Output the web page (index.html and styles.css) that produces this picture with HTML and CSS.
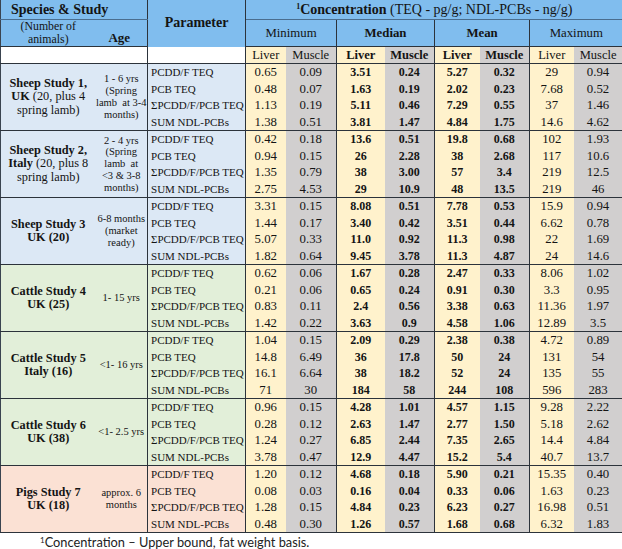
FILE: index.html
```html
<!DOCTYPE html>
<html lang="en">
<head>
<meta charset="utf-8">
<title>Concentration table</title>
<link rel="stylesheet" href="styles.css">
</head>
<body>
<table class="conc">
  <colgroup>
    <col class="w-sp"><col class="w-age"><col class="w-par">
    <col class="w-minl"><col class="w-minm">
    <col class="w-medl"><col class="w-medm">
    <col class="w-meal"><col class="w-meam">
    <col class="w-maxl"><col class="w-maxm">
  </colgroup>
  <thead>
    <tr class="hr1">
      <th colspan="2" class="hd hd-title hd-species bb-soft vr">Species &amp; Study</th>
      <th rowspan="2" class="hd hd-title vr">Parameter</th>
      <th colspan="8" class="hd hd-title bb-soft"><sup>1</sup>Concentration <span class="nb">(TEQ - pg/g; NDL-PCBs - ng/g)</span></th>
    </tr>
    <tr class="hr2">
      <th class="hd hd-num">(Number of<br>animals)</th>
      <th class="hd hd-age vr">Age</th>
      <th colspan="2" class="hd hd-stat vr">Minimum</th>
      <th colspan="2" class="hd hd-stat b vr">Median</th>
      <th colspan="2" class="hd hd-stat b vr">Mean</th>
      <th colspan="2" class="hd hd-stat">Maximum</th>
    </tr>
    <tr class="hr3">
      <td colspan="2" class="blank vr"></td>
      <td class="blank vr"></td>
      <th class="lv sub">Liver</th><th class="mu sub vr">Muscle</th>
      <th class="lv sub b">Liver</th><th class="mu sub b vr">Muscle</th>
      <th class="lv sub b">Liver</th><th class="mu sub b vr">Muscle</th>
      <th class="lv sub">Liver</th><th class="mu sub">Muscle</th>
    </tr>
  </thead>
  <tbody class="sheep">
    <tr class="first">
      <td rowspan="4" class="sp"><b>Sheep Study 1,</b><br><b>UK</b> (20, plus 4<br>spring lamb)</td>
      <td rowspan="4" class="age vr">1 - 6 yrs<br>(Spring<br>lamb&nbsp; at 3-4<br>months)</td>
      <td class="par vr">PCDD/F TEQ</td>
      <td class="lv">0.65</td><td class="mu vr">0.09</td><td class="lv b">3.51</td><td class="mu b vr">0.24</td><td class="lv b">5.27</td><td class="mu b vr">0.32</td><td class="lv">29</td><td class="mu">0.94</td>
    </tr>
    <tr><td class="par vr">PCB TEQ</td>
      <td class="lv">0.48</td><td class="mu vr">0.07</td><td class="lv b">1.63</td><td class="mu b vr">0.19</td><td class="lv b">2.02</td><td class="mu b vr">0.23</td><td class="lv">7.68</td><td class="mu">0.52</td></tr>
    <tr><td class="par vr">ΣPCDD/F/PCB TEQ</td>
      <td class="lv">1.13</td><td class="mu vr">0.19</td><td class="lv b">5.11</td><td class="mu b vr">0.46</td><td class="lv b">7.29</td><td class="mu b vr">0.55</td><td class="lv">37</td><td class="mu">1.46</td></tr>
    <tr><td class="par vr">SUM NDL-PCBs</td>
      <td class="lv">1.38</td><td class="mu vr">0.51</td><td class="lv b">3.81</td><td class="mu b vr">1.47</td><td class="lv b">4.84</td><td class="mu b vr">1.75</td><td class="lv">14.6</td><td class="mu">4.62</td></tr>
  </tbody>
  <tbody class="sheep">
    <tr class="first">
      <td rowspan="4" class="sp"><b>Sheep Study 2,</b><br><b>Italy</b> (20, plus 8<br>spring lamb)</td>
      <td rowspan="4" class="age vr">2 - 4 yrs<br>(Spring<br>lamb&nbsp; at<br>&lt;3 &amp; 3-8<br>months)</td>
      <td class="par vr">PCDD/F TEQ</td>
      <td class="lv">0.42</td><td class="mu vr">0.18</td><td class="lv b">13.6</td><td class="mu b vr">0.51</td><td class="lv b">19.8</td><td class="mu b vr">0.68</td><td class="lv">102</td><td class="mu">1.93</td>
    </tr>
    <tr><td class="par vr">PCB TEQ</td>
      <td class="lv">0.94</td><td class="mu vr">0.15</td><td class="lv b">26</td><td class="mu b vr">2.28</td><td class="lv b">38</td><td class="mu b vr">2.68</td><td class="lv">117</td><td class="mu">10.6</td></tr>
    <tr><td class="par vr">ΣPCDD/F/PCB TEQ</td>
      <td class="lv">1.35</td><td class="mu vr">0.79</td><td class="lv b">38</td><td class="mu b vr">3.00</td><td class="lv b">57</td><td class="mu b vr">3.4</td><td class="lv">219</td><td class="mu">12.5</td></tr>
    <tr><td class="par vr">SUM NDL-PCBs</td>
      <td class="lv">2.75</td><td class="mu vr">4.53</td><td class="lv b">29</td><td class="mu b vr">10.9</td><td class="lv b">48</td><td class="mu b vr">13.5</td><td class="lv">219</td><td class="mu">46</td></tr>
  </tbody>
  <tbody class="sheep">
    <tr class="first">
      <td rowspan="4" class="sp"><b>Sheep Study 3<br>UK (20)</b></td>
      <td rowspan="4" class="age vr">6-8 months<br>(market<br>ready)</td>
      <td class="par vr">PCDD/F TEQ</td>
      <td class="lv">3.31</td><td class="mu vr">0.15</td><td class="lv b">8.08</td><td class="mu b vr">0.51</td><td class="lv b">7.78</td><td class="mu b vr">0.53</td><td class="lv">15.9</td><td class="mu">0.94</td>
    </tr>
    <tr><td class="par vr">PCB TEQ</td>
      <td class="lv">1.44</td><td class="mu vr">0.17</td><td class="lv b">3.40</td><td class="mu b vr">0.42</td><td class="lv b">3.51</td><td class="mu b vr">0.44</td><td class="lv">6.62</td><td class="mu">0.78</td></tr>
    <tr><td class="par vr">ΣPCDD/F/PCB TEQ</td>
      <td class="lv">5.07</td><td class="mu vr">0.33</td><td class="lv b">11.0</td><td class="mu b vr">0.92</td><td class="lv b">11.3</td><td class="mu b vr">0.98</td><td class="lv">22</td><td class="mu">1.69</td></tr>
    <tr><td class="par vr">SUM NDL-PCBs</td>
      <td class="lv">1.82</td><td class="mu vr">0.64</td><td class="lv b">9.45</td><td class="mu b vr">3.78</td><td class="lv b">11.3</td><td class="mu b vr">4.87</td><td class="lv">24</td><td class="mu">14.6</td></tr>
  </tbody>
  <tbody class="cattle">
    <tr class="first">
      <td rowspan="4" class="sp"><b>Cattle Study 4<br>UK (25)</b></td>
      <td rowspan="4" class="age vr">1- 15 yrs</td>
      <td class="par vr">PCDD/F TEQ</td>
      <td class="lv">0.62</td><td class="mu vr">0.06</td><td class="lv b">1.67</td><td class="mu b vr">0.28</td><td class="lv b">2.47</td><td class="mu b vr">0.33</td><td class="lv">8.06</td><td class="mu">1.02</td>
    </tr>
    <tr><td class="par vr">PCB TEQ</td>
      <td class="lv">0.21</td><td class="mu vr">0.06</td><td class="lv b">0.65</td><td class="mu b vr">0.24</td><td class="lv b">0.91</td><td class="mu b vr">0.30</td><td class="lv">3.3</td><td class="mu">0.95</td></tr>
    <tr><td class="par vr">ΣPCDD/F/PCB TEQ</td>
      <td class="lv">0.83</td><td class="mu vr">0.11</td><td class="lv b">2.4</td><td class="mu b vr">0.56</td><td class="lv b">3.38</td><td class="mu b vr">0.63</td><td class="lv">11.36</td><td class="mu">1.97</td></tr>
    <tr><td class="par vr">SUM NDL-PCBs</td>
      <td class="lv">1.42</td><td class="mu vr">0.22</td><td class="lv b">3.63</td><td class="mu b vr">0.9</td><td class="lv b">4.58</td><td class="mu b vr">1.06</td><td class="lv">12.89</td><td class="mu">3.5</td></tr>
  </tbody>
  <tbody class="cattle">
    <tr class="first">
      <td rowspan="4" class="sp"><b>Cattle Study 5<br>Italy (16)</b></td>
      <td rowspan="4" class="age vr">&lt;1- 16 yrs</td>
      <td class="par vr">PCDD/F TEQ</td>
      <td class="lv">1.04</td><td class="mu vr">0.15</td><td class="lv b">2.09</td><td class="mu b vr">0.29</td><td class="lv b">2.38</td><td class="mu b vr">0.38</td><td class="lv">4.72</td><td class="mu">0.89</td>
    </tr>
    <tr><td class="par vr">PCB TEQ</td>
      <td class="lv">14.8</td><td class="mu vr">6.49</td><td class="lv b">36</td><td class="mu b vr">17.8</td><td class="lv b">50</td><td class="mu b vr">24</td><td class="lv">131</td><td class="mu">54</td></tr>
    <tr><td class="par vr">ΣPCDD/F/PCB TEQ</td>
      <td class="lv">16.1</td><td class="mu vr">6.64</td><td class="lv b">38</td><td class="mu b vr">18.2</td><td class="lv b">52</td><td class="mu b vr">24</td><td class="lv">135</td><td class="mu">55</td></tr>
    <tr><td class="par vr">SUM NDL-PCBs</td>
      <td class="lv">71</td><td class="mu vr">30</td><td class="lv b">184</td><td class="mu b vr">58</td><td class="lv b">244</td><td class="mu b vr">108</td><td class="lv">596</td><td class="mu">283</td></tr>
  </tbody>
  <tbody class="cattle">
    <tr class="first">
      <td rowspan="4" class="sp"><b>Cattle Study 6<br>UK (38)</b></td>
      <td rowspan="4" class="age vr">&lt;1- 2.5 yrs</td>
      <td class="par vr">PCDD/F TEQ</td>
      <td class="lv">0.96</td><td class="mu vr">0.15</td><td class="lv b">4.28</td><td class="mu b vr">1.01</td><td class="lv b">4.57</td><td class="mu b vr">1.15</td><td class="lv">9.28</td><td class="mu">2.22</td>
    </tr>
    <tr><td class="par vr">PCB TEQ</td>
      <td class="lv">0.28</td><td class="mu vr">0.12</td><td class="lv b">2.63</td><td class="mu b vr">1.47</td><td class="lv b">2.77</td><td class="mu b vr">1.50</td><td class="lv">5.18</td><td class="mu">2.62</td></tr>
    <tr><td class="par vr">ΣPCDD/F/PCB TEQ</td>
      <td class="lv">1.24</td><td class="mu vr">0.27</td><td class="lv b">6.85</td><td class="mu b vr">2.44</td><td class="lv b">7.35</td><td class="mu b vr">2.65</td><td class="lv">14.4</td><td class="mu">4.84</td></tr>
    <tr><td class="par vr">SUM NDL-PCBs</td>
      <td class="lv">3.78</td><td class="mu vr">0.47</td><td class="lv b">12.9</td><td class="mu b vr">4.47</td><td class="lv b">15.2</td><td class="mu b vr">5.4</td><td class="lv">40.7</td><td class="mu">13.7</td></tr>
  </tbody>
  <tbody class="pigs">
    <tr class="first">
      <td rowspan="4" class="sp"><b>Pigs Study 7<br>UK (18)</b></td>
      <td rowspan="4" class="age vr">approx. 6<br>months</td>
      <td class="par vr">PCDD/F TEQ</td>
      <td class="lv">1.20</td><td class="mu vr">0.12</td><td class="lv b">4.68</td><td class="mu b vr">0.18</td><td class="lv b">5.90</td><td class="mu b vr">0.21</td><td class="lv">15.35</td><td class="mu">0.40</td>
    </tr>
    <tr><td class="par vr">PCB TEQ</td>
      <td class="lv">0.08</td><td class="mu vr">0.03</td><td class="lv b">0.16</td><td class="mu b vr">0.04</td><td class="lv b">0.33</td><td class="mu b vr">0.06</td><td class="lv">1.63</td><td class="mu">0.23</td></tr>
    <tr><td class="par vr">ΣPCDD/F/PCB TEQ</td>
      <td class="lv">1.28</td><td class="mu vr">0.15</td><td class="lv b">4.84</td><td class="mu b vr">0.23</td><td class="lv b">6.23</td><td class="mu b vr">0.27</td><td class="lv">16.98</td><td class="mu">0.51</td></tr>
    <tr class="last"><td class="par vr">SUM NDL-PCBs</td>
      <td class="lv">0.48</td><td class="mu vr">0.30</td><td class="lv b">1.26</td><td class="mu b vr">0.57</td><td class="lv b">1.68</td><td class="mu b vr">0.68</td><td class="lv">6.32</td><td class="mu">1.83</td></tr>
  </tbody>
</table>
<p class="note"><sup>1</sup>Concentration – Upper bound, fat weight basis.</p>
</body>
</html>
```

FILE: styles.css
```css
html, body {
  margin: 0;
  padding: 0;
  background: #ffffff;
}

body {
  width: 622px;
  font-family: "Liberation Serif", "Times New Roman", serif;
  color: #141414;
}

.conc {
  width: 622px;
  border-collapse: collapse;
  table-layout: fixed;
  border-left: 1px solid #3a4450;
  border-bottom: 1px solid #2c333b;
}

.w-sp { width: 95px; }
.w-age { width: 52px; }
.w-par { width: 98px; }
.w-minl { width: 40px; }
.w-minm { width: 51px; }
.w-medl { width: 48px; }
.w-medm { width: 50px; }
.w-meal { width: 45px; }
.w-meam { width: 50px; }
.w-maxl { width: 44px; }
.w-maxm { width: 49px; }

.conc th,
.conc td {
  padding: 0;
  border: 0;
  font-weight: normal;
  text-align: center;
  vertical-align: middle;
  white-space: nowrap;
}

.vr { border-right: 1px solid #2c333b !important; }

/* header */
.hd {
  background: #80bdee;
}

.hr1 th { height: 19px; }
.hr2 th { height: 26px; border-bottom: 1px solid #2c333b; }
.hr3 th, .hr3 td { height: 16px; }

.bb-soft { border-bottom: 1px solid #4a6d8e !important; }

.hd-title {
  font-weight: bold !important;
  font-size: 14px;
  line-height: 16px;
}

.hd-species {
  text-align: left !important;
  padding-left: 10px !important;
}

.hd-title sup {
  font-size: 8px;
  vertical-align: 5px;
  line-height: 0;
}

.nb { font-weight: normal; }

.hd-num {
  font-size: 11.8px;
  line-height: 13px;
  text-align: center;
}

.hr2 .hd-age {
  font-weight: bold;
  font-size: 13px;
  line-height: 15px;
  height: 17px;
  padding-top: 9px;
  padding-right: 4px;
}

.hd-stat {
  font-size: 12.8px;
  line-height: 15px;
}

.blank { background: #ffffff; }

.sub {
  font-size: 12.5px;
  line-height: 14px;
}

.b { font-weight: bold !important; }

/* body */
tbody tr.first td { border-top: 1px solid #2c333b; }

tbody td {
  height: 16.5px;
  font-size: 12.8px;
  line-height: 14px;
}

tbody td.b { font-size: 12px; }

.lv { background: #fff2cc; }
.mu { background: #d1cfcf; }

.sheep .sp, .sheep .age, .sheep .par { background: #dce8f5; }
.cattle .sp, .cattle .age, .cattle .par { background: #e2efd9; }
.pigs .sp, .pigs .age, .pigs .par { background: #fbe1d4; }

.sp {
  font-size: 12.3px;
  line-height: 13.5px;
}

.age {
  font-size: 10.5px;
  line-height: 11.8px;
}

.par {
  text-align: left !important;
  padding-left: 3px !important;
  font-size: 11px;
}

.note {
  margin: 2px 0 0 0;
  padding-left: 40px;
  font-family: "Lato", "Open Sans", sans-serif;
  font-size: 12.8px;
  line-height: 15px;
  color: #222;
}

.note sup {
  font-size: 8px;
  vertical-align: 4px;
  line-height: 0;
}
```
